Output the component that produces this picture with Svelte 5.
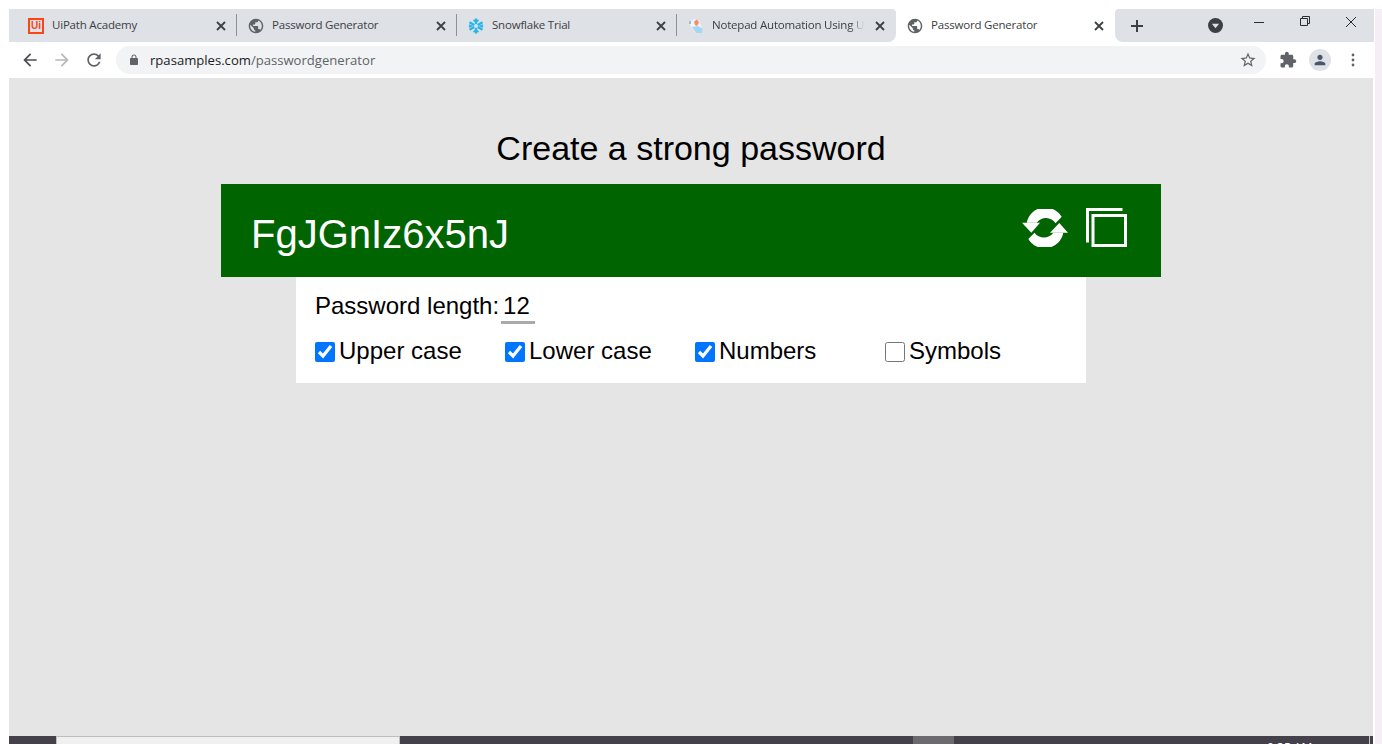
<script>
  const globe = "M12 2C6.48 2 2 6.48 2 12s4.48 10 10 10 10-4.48 10-10S17.52 2 12 2zm-1 17.93c-3.95-.49-7-3.85-7-7.93 0-.62.08-1.21.21-1.79L9 15v1c0 1.1.9 2 2 2v1.93zm6.9-2.54c-.26-.81-1-1.39-1.9-1.39h-1v-3c0-.55-.45-1-1-1H8v-2h2c.55 0 1-.45 1-1V7h2c1.1 0 2-.9 2-2v-.41c2.93 1.19 5 4.06 5 7.41 0 2.08-.8 3.97-2.1 5.39z";
  const options = [
    { label: "Upper case", checked: true },
    { label: "Lower case", checked: true },
    { label: "Numbers", checked: true },
    { label: "Symbols", checked: false }
  ];
</script>

{#snippet close()}
  <svg class="close" viewBox="0 0 10 10"><path d="M1 1l8 8M9 1l-8 8" /></svg>
{/snippet}

{#snippet globeIcon()}
  <svg class="fav" viewBox="1 1 22 22"><path d={globe} fill="#5f6368" /></svg>
{/snippet}

<div class="screen">
  <div class="window">
    <div class="tabstrip">
      <div class="tabs">
        <div class="tab">
          <span class="uipath">Ui</span>
          <span class="title">UiPath Academy</span>
          {@render close()}
        </div>
        <div class="tab">
          {@render globeIcon()}
          <span class="title">Password Generator</span>
          {@render close()}
        </div>
        <div class="tab">
          <svg class="fav" viewBox="0 0 16 16">
            <g stroke="#29b5e8" stroke-width="2.2" fill="none">
              <path d="M8 0.500V15.500M1.500 4.200L14.500 11.800M1.500 11.800L14.500 4.200" />
              <path d="M5.500 1.800L8 4.200L10.500 1.800M5.500 14.200L8 11.800L10.500 14.200" stroke-width="1.600" />
              <path d="M1 7L3.500 8L1 9M15 7L12.500 8L15 9" stroke-width="1.600" />
            </g>
            <circle cx="8" cy="8" r="2" fill="#cfe8f5" />
          </svg>
          <span class="title">Snowflake Trial</span>
          {@render close()}
        </div>
        <div class="tab last">
          <svg class="fav" viewBox="0 0 16 16">
            <path d="M1 5L6 1L11 3L15 12L14 15L7 15L4 10Z" fill="#eef4fa" />
            <path d="M4 9L10 8L15 11L14 15L8 15Z" fill="#a6d5f5" />
            <path d="M6 3.500L9 1.500L11 4.500L9 8L7 7Z" fill="#f4905f" />
            <path d="M1 3h2v3H1z" fill="#9fbbd6" />
          </svg>
          <span class="title fade">Notepad Automation Using UiPath</span>
          {@render close()}
        </div>
      </div>
      <div class="tab active">
        {@render globeIcon()}
        <span class="title">Password Generator</span>
        {@render close()}
      </div>
      <div class="strip-rest">
        <svg class="plus" viewBox="0 0 12 12"><path d="M6 0v12M0 6h12" /></svg>
        <svg class="search" viewBox="0 0 14 14">
          <circle cx="7" cy="7" r="7" fill="#3c4043" />
          <path d="M3.6 5.4h6.8L7 9.6z" fill="#dee1e6" />
        </svg>
        <div class="controls">
          <svg viewBox="0 0 46 20"><path d="M18 10.500h10" /></svg>
          <svg viewBox="0 0 46 20">
            <path d="M18.500 6.500h7v7h-7zM20.500 6.500v-2h7v7h-2" />
          </svg>
          <svg viewBox="0 0 46 20"><path d="M18 5l10 10M28 5L18 15" /></svg>
        </div>
      </div>
    </div>

    <div class="toolbar">
      <svg class="tool back" viewBox="0 0 24 24"><path d="M20 11H7.830l5.590-5.590L12 4l-8 8 8 8 1.410-1.410L7.830 13H20v-2z" /></svg>
      <svg class="tool fwd" viewBox="0 0 24 24"><path d="M12 4l-1.410 1.410L16.170 11H4v2h12.170l-5.580 5.590L12 20l8-8z" /></svg>
      <svg class="tool reload" viewBox="0 0 24 24"><path d="M17.650 6.350C16.200 4.900 14.210 4 12 4c-4.420 0-7.990 3.580-7.990 8s3.570 8 7.990 8c3.730 0 6.840-2.550 7.730-6h-2.080c-.82 2.330-3.040 4-5.650 4-3.310 0-6-2.690-6-6s2.690-6 6-6c1.660 0 3.140.69 4.220 1.780L13 11h7V4l-2.350 2.350z" /></svg>
      <div class="omnibox">
        <svg class="lock" viewBox="0 0 24 24"><path d="M18 8h-1V6c0-2.760-2.240-5-5-5S7 3.240 7 6v2H6c-1.100 0-2 .9-2 2v10c0 1.100.9 2 2 2h12c1.100 0 2-.9 2-2V10c0-1.100-.9-2-2-2zm-6-5c1.660 0 3 1.340 3 3v2H9V6c0-1.660 1.340-3 3-3z" /></svg>
        <span class="url"><span class="host">rpasamples.com</span>/passwordgenerator</span>
        <svg class="star" viewBox="0 0 24 24"><path d="M22 9.240l-7.190-.62L12 2 9.190 8.630 2 9.240l5.460 4.730L5.820 21 12 17.270 18.180 21l-1.630-7.030L22 9.240zM12 15.400l-3.760 2.270 1-4.280-3.320-2.880 4.380-.38L12 6.100l1.710 4.040 4.380.38-3.320 2.880 1 4.280L12 15.400z" /></svg>
      </div>
      <svg class="tool ext" viewBox="0 0 24 24"><path d="M20.500 11H19V7c0-1.100-.9-2-2-2h-4V3.500C13 2.120 11.880 1 10.500 1S8 2.120 8 3.500V5H4c-1.100 0-1.990.9-1.990 2v3.800H3.500c1.490 0 2.700 1.210 2.700 2.700s-1.210 2.700-2.700 2.700H2V20c0 1.100.9 2 2 2h3.800v-1.500c0-1.490 1.210-2.700 2.700-2.700 1.490 0 2.700 1.210 2.700 2.700V22H17c1.100 0 2-.9 2-2v-4h1.500c1.380 0 2.500-1.120 2.500-2.500S21.880 11 20.500 11z" /></svg>
      <div class="avatar">
        <svg viewBox="0 0 24 24"><path d="M12 12c2.210 0 4-1.790 4-4s-1.790-4-4-4-4 1.790-4 4 1.790 4 4 4zm0 2c-2.670 0-8 1.340-8 4v2h16v-2c0-2.660-5.330-4-8-4z" /></svg>
      </div>
      <svg class="menu" viewBox="0 0 4 14"><circle cx="2" cy="2" r="1.400" /><circle cx="2" cy="7" r="1.400" /><circle cx="2" cy="12" r="1.400" /></svg>
    </div>

    <main class="page">
      <h1>Create a strong password</h1>
      <div class="result">
        <span class="password">FgJGnIz6x5nJ</span>
        <div class="actions">
          <svg class="sync" viewBox="0 0 46 38">
            <path d="M4.700 13.700A19 19 0 0 1 39.700 7.700L33.500 14.300A11.500 11.500 0 0 0 14.700 13.700Z" />
            <path d="M0 13.700H18L9.300 23.700Z" />
            <path d="M41.300 23.700A19 19 0 0 1 6.300 30L12.500 23.700A11.500 11.500 0 0 0 31.300 23.700Z" />
            <path d="M28 23.700H46L37.300 14Z" />
          </svg>
          <svg class="copy" viewBox="0 0 41 39">
            <path d="M1.500 34.500V1.500H36.500" />
            <path d="M7 7.500H39.500V37.500H7Z" />
          </svg>
        </div>
      </div>
      <div class="panel">
        <div class="length">
          <span>Password length:</span>
          <span class="value">12</span>
        </div>
        <div class="options">
          {#each options as o}
            <label class="option">
              <input type="checkbox" checked={o.checked} />
              <span>{o.label}</span>
            </label>
          {/each}
        </div>
      </div>
    </main>

    <div class="taskbar">
      <div class="tb-start"></div>
      <div class="tb-app"></div>
      <div class="tb-gap"></div>
      <div class="tb-hi"></div>
      <div class="tb-fill"><span class="clock">9:35 AM</span></div>
    </div>
  </div>
  <div class="edge"></div>
</div>

<style>
  :global(body) {
    margin: 0;
    background: #fff;
    overflow: hidden;
  }
  .screen {
    display: flex;
    width: 1382px;
    height: 744px;
    padding: 9px 0 0 9px;
    box-sizing: border-box;
    overflow: hidden;
    font-family: "Liberation Sans", Arial, sans-serif;
  }
  .window {
    width: 1364px;
    display: flex;
    flex-direction: column;
    flex: none;
  }
  .edge {
    flex: 1;
    margin-left: 2px;
    background: #f5eef5;
  }

  .tabstrip {
    display: flex;
    height: 33px;
    flex: none;
  }
  .tabs {
    display: flex;
    width: 887px;
    padding-left: 8px;
    box-sizing: border-box;
    background: #dee1e6;
    border-radius: 0 4px 8px 0;
  }
  .tab {
    width: 220px;
    display: flex;
    align-items: center;
    padding: 0 8px 0 11px;
    box-sizing: border-box;
    flex: none;
    border-right: 1px solid #8d9095;
    border-image: linear-gradient(transparent 6px, #8d9095 6px, #8d9095 26px, transparent 26px) 1;
  }
  .tab.last {
    width: 219px;
    border-right: none;
    border-image: none;
    padding-right: 9px;
  }
  .tab.active {
    width: 219px;
    border: none;
    border-image: none;
    padding: 0 9px 0 11px;
    background: #fff;
  }
  .fav {
    width: 16px;
    height: 16px;
    flex: none;
  }
  .uipath {
    width: 16px;
    height: 16px;
    box-sizing: border-box;
    border: 2px solid #fa4616;
    color: #fa4616;
    font: 700 10px/12px "Liberation Sans", sans-serif;
    text-align: center;
    flex: none;
  }
  .title {
    flex: 1;
    min-width: 0;
    margin-left: 8px;
    font: 11.5px/16px "Open Sans", sans-serif;
    letter-spacing: -0.2px;
    color: #3c4043;
    white-space: nowrap;
    overflow: hidden;
    padding-bottom: 1px;
  }
  .fade {
    -webkit-mask-image: linear-gradient(to right, #000 88%, transparent 97%);
    mask-image: linear-gradient(to right, #000 88%, transparent 97%);
  }
  .close {
    width: 10px;
    height: 10px;
    flex: none;
    margin-left: 6px;
    margin-right: 2px;
  }
  .close path {
    stroke: #3c4043;
    stroke-width: 1.8;
    fill: none;
  }
  .strip-rest {
    flex: 1;
    display: flex;
    align-items: center;
    background: #dee1e6;
    border-radius: 4px 0 0 8px;
  }
  .plus {
    width: 12px;
    height: 12px;
    margin-left: 16px;
  }
  .plus path {
    stroke: #3c4043;
    stroke-width: 2;
    fill: none;
  }
  .search {
    width: 15px;
    height: 15px;
    margin-left: 65px;
  }
  .controls {
    display: flex;
    margin-left: 13px;
    align-self: flex-start;
    padding-top: 3px;
  }
  .controls svg {
    width: 46px;
    height: 20px;
    display: block;
  }
  .controls path {
    fill: none;
    stroke: #2a2c30;
    stroke-width: 1;
  }

  .toolbar {
    height: 36px;
    flex: none;
    display: flex;
    align-items: center;
    background: #fff;
    padding-left: 11px;
    box-sizing: border-box;
  }
  .tool {
    width: 20px;
    height: 20px;
    fill: #5f6368;
    flex: none;
  }
  .back {
    fill: #4a4d51;
  }
  .fwd {
    margin-left: 12px;
    fill: #b5b8bb;
  }
  .reload {
    margin-left: 12px;
  }
  .omnibox {
    width: 1150px;
    height: 28px;
    margin-left: 12px;
    flex: none;
    border-radius: 14px;
    background: #f1f3f4;
    display: flex;
    align-items: center;
    padding: 0 9px 0 12px;
    box-sizing: border-box;
  }
  .lock {
    width: 12px;
    height: 12px;
    fill: #5f6368;
    flex: none;
  }
  .url {
    flex: 1;
    margin-left: 10px;
    font: 13.1px "Open Sans", sans-serif;
    color: #5f6368;
    white-space: nowrap;
  }
  .host {
    color: #202124;
  }
  .star {
    width: 18px;
    height: 18px;
    fill: #5f6368;
    flex: none;
  }
  .ext {
    margin-left: 13px;
    width: 18px;
    height: 18px;
  }
  .avatar {
    width: 22px;
    height: 22px;
    margin-left: 12px;
    border-radius: 50%;
    background: #dee1e6;
    display: flex;
    align-items: center;
    justify-content: center;
    flex: none;
  }
  .avatar svg {
    width: 16px;
    height: 16px;
    fill: #4a5568;
  }
  .menu {
    width: 4px;
    height: 14px;
    margin-left: 20px;
    fill: #5f6368;
    flex: none;
  }

  .page {
    flex: 1;
    min-height: 0;
    background: #e5e5e5;
    display: flex;
    flex-direction: column;
    align-items: center;
  }
  h1 {
    margin: 50px 0 0;
    font-size: 34px;
    line-height: 40px;
    font-weight: 400;
    color: #000;
    height: 56px;
  }
  .result {
    width: 940px;
    height: 93px;
    flex: none;
    background: #006400;
    color: #fff;
    display: flex;
    align-items: center;
    justify-content: space-between;
    padding: 0 34px 0 30px;
    box-sizing: border-box;
  }
  .password {
    font-size: 40px;
    line-height: 46px;
    padding-top: 6px;
  }
  .actions {
    display: flex;
    align-items: flex-start;
    gap: 18px;
    padding-bottom: 6px;
  }
  .sync {
    width: 46px;
    height: 38px;
    margin-top: 1px;
    fill: #fff;
    display: block;
  }
  .copy {
    width: 41px;
    height: 39px;
    display: block;
  }
  .copy path {
    fill: none;
    stroke: #fff;
    stroke-width: 3;
  }
  .panel {
    width: 790px;
    height: 106px;
    flex: none;
    background: #fff;
    box-sizing: border-box;
    padding: 12px 19px 0;
    color: #000;
    font-size: 24px;
  }
  .length {
    display: flex;
    align-items: flex-start;
    line-height: 34px;
  }
  .value {
    width: 34px;
    height: 35px;
    box-sizing: border-box;
    margin-left: 2px;
    padding-left: 2px;
    border-bottom: 3px solid #aaa;
    line-height: 34px;
  }
  .options {
    display: flex;
    margin-top: 10px;
  }
  .option {
    width: 190px;
    flex: none;
    display: flex;
    align-items: center;
    gap: 4px;
    line-height: 34px;
  }
  .option input {
    width: 20px;
    height: 20px;
    margin: 1px 0 0;
    flex: none;
  }

  .taskbar {
    height: 8px;
    flex: none;
    display: flex;
    background: #45414a;
    overflow: hidden;
  }
  .tb-start {
    width: 47px;
  }
  .tb-app {
    width: 344px;
    box-sizing: border-box;
    background: #f0f0f0;
    border: 1px solid #bdbdbd;
    border-bottom: none;
  }
  .tb-gap {
    width: 513px;
  }
  .tb-hi {
    width: 41px;
    background: #6c6a6e;
  }
  .tb-fill {
    flex: 1;
    border-right: 1px solid #c8c8c8;
    margin-right: 3px;
    padding-left: 313px;
  }
  .clock {
    display: block;
    margin-top: 4px;
    font: 12px/16px "Open Sans", sans-serif;
    color: #fff;
    white-space: nowrap;
  }
</style>
